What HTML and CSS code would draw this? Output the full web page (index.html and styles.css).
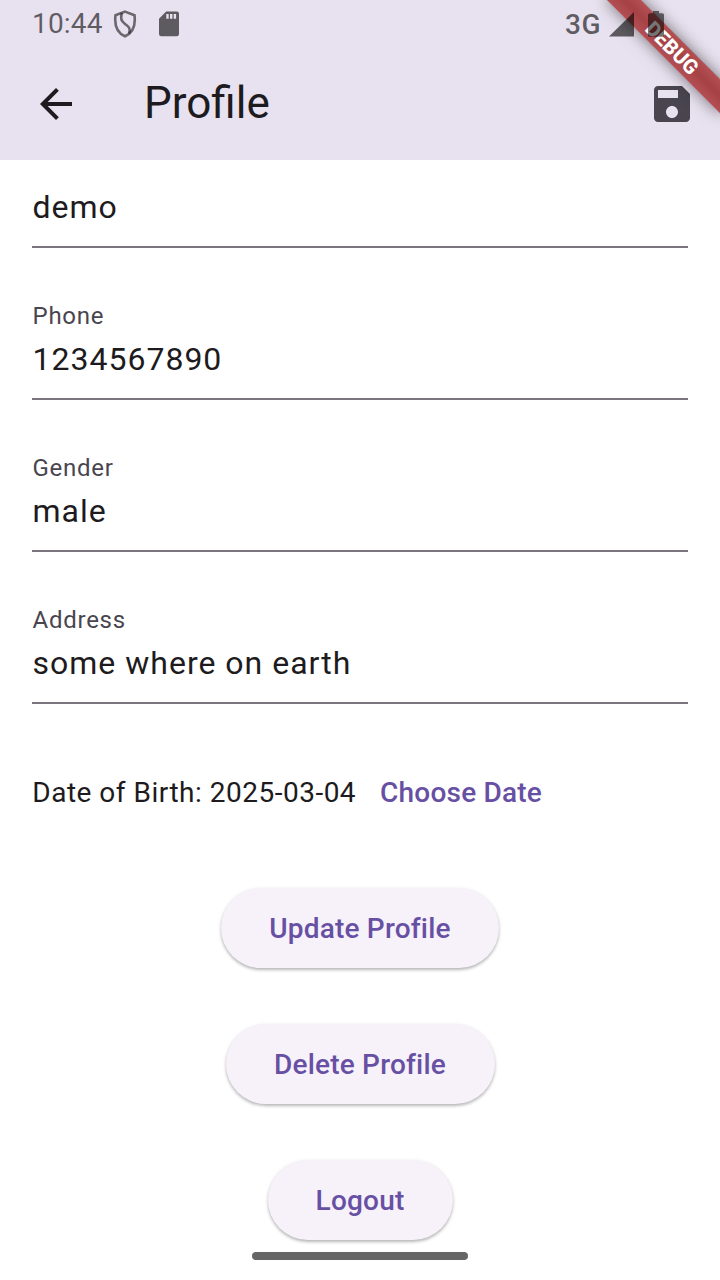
FILE: index.html
```
<!DOCTYPE html>
<html lang="en">
<head>
<meta charset="utf-8">
<title>Profile</title>
<link rel="stylesheet" href="styles.css">
</head>
<body>
<div class="screen">
  <header class="top">
    <div class="status">
      <span class="clock">10:44</span>
      <svg class="shield" width="24" height="28" viewBox="0 0 24 28" fill="none" stroke="currentColor" stroke-width="2.6"><path d="M12 1.600 21.500 5.200C22.600 14 20.500 22.500 12 26.300 3.500 22.500 1.400 14 2.500 5.200Z"/><path d="M9 3C7 8 8.500 11.500 12 14S18 18 16 23.500"/></svg>
      <svg class="sd" width="20" height="26" viewBox="0 0 20 26" fill="currentColor" fill-rule="evenodd"><path d="M7.200 .5H17.700Q20 .5 20 2.800V23Q20 25.300 17.700 25.300H2.300Q0 25.300 0 23V7.800ZM7.300 3V7.800H9.700V3ZM11 3V7.800H13.400V3ZM14.700 3V7.800H17.100V3Z"/></svg>
      <span class="network">3G</span>
      <svg class="signal" width="25" height="25" viewBox="0 0 25 25" fill="currentColor"><path d="M25 0V24.500H0Z"/></svg>
      <svg class="battery" width="16" height="26" viewBox="0 0 16 26" fill="currentColor"><path d="M5 0H11V2.200H14.400Q16 2.200 16 3.800V24.200Q16 25.800 14.400 25.800H1.600Q0 25.800 0 24.200V3.800Q0 2.200 1.600 2.200H5Z"/></svg>
    </div>
    <div class="appbar">
      <svg class="back" width="48" height="48" viewBox="0 0 24 24" fill="currentColor"><path d="M20 11H7.830l5.590-5.590L12 4l-8 8 8 8 1.410-1.410L7.830 13H20v-2z"/></svg>
      <h1 class="title">Profile</h1>
      <svg class="save" width="48" height="48" viewBox="0 0 24 24" fill="currentColor"><path d="M17 3H5c-1.110 0-2 .9-2 2v14c0 1.100.89 2 2 2h14c1.100 0 2-.9 2-2V7l-4-4zm-5 16c-1.660 0-3-1.340-3-3s1.340-3 3-3 3 1.340 3 3-1.340 3-3 3zm3-10H5V5h10v4z"/></svg>
    </div>
  </header>
  <main class="content">
    <div class="field field-first"><div class="value">demo</div></div>
    <div class="field"><div class="label">Phone</div><div class="value">1234567890</div></div>
    <div class="field"><div class="label">Gender</div><div class="value">male</div></div>
    <div class="field"><div class="label">Address</div><div class="value">some where on earth</div></div>
    <div class="birth"><span>Date of Birth: 2025-03-04</span><span class="choose">Choose Date</span></div>
    <div class="actions">
      <button class="btn btn-update">Update Profile</button>
      <button class="btn btn-delete">Delete Profile</button>
      <button class="btn btn-logout">Logout</button>
    </div>
  </main>
  <div class="banner">DEBUG</div>
  <div class="home"></div>
</div>
</body>
</html>
```
FILE: styles.css
```
* { box-sizing: border-box; }
body { margin: 0; font-family: Roboto, sans-serif; color: #1d1b20; background: #fff; }
.screen { position: relative; width: 720px; height: 1280px; overflow: hidden; }
.top { height: 160px; background: #e8e1ef; }
.status { position: relative; z-index: 2; display: flex; align-items: flex-start; height: 48px; color: rgba(0, 0, 0, 0.6); }
.status svg { display: block; flex: none; }
.clock { width: 81px; padding-left: 32px; font-size: 28px; line-height: 32px; margin-top: 8px; letter-spacing: 0.2px; }
.shield { margin: 10px 0 0 32px; opacity: 0.9; }
.sd { margin: 11px 0 0 22px; }
.network { margin: 9px 0 0 386px; width: 44px; font-size: 28px; line-height: 32px; font-weight: 500; letter-spacing: 0.5px; white-space: nowrap; }
.signal { margin-top: 12px; }
.battery { margin: 11px 0 0 14px; color: rgba(0, 0, 0, 0.54); }
.appbar { display: flex; align-items: center; height: 112px; padding: 0 24px 0 32px; }
.title { margin: -2px 0 0 64px; font-size: 44px; line-height: 56px; font-weight: 400; }
.save { margin-left: auto; color: #49454f; }
.content { padding: 0 32px; }
.field { height: 152px; border-bottom: 2px solid #79747e; padding-top: 54px; }
.field-first { height: 88px; padding-top: 23px; }
.label { padding-left: 0.5px; font-size: 24px; line-height: 28px; letter-spacing: 0.75px; color: #49454f; }
.value { padding-left: 0.5px; font-size: 32px; line-height: 48px; letter-spacing: 1px; margin-top: 5px; }
.field-first .value { margin-top: 0; }
.birth { display: flex; gap: 24px; margin-top: 69px; padding-left: 0.3px; font-size: 28px; line-height: 40px; letter-spacing: 0.5px; }
.choose { color: #6750a4; font-weight: 500; letter-spacing: 0.2px; }
.actions { display: flex; flex-direction: column; align-items: center; gap: 56px; margin-top: 75px; }
.btn { height: 80px; padding: 2px 0 0; border: 0; border-radius: 40px; background: #f7f2fa; color: #6750a4; font: 500 28px/40px Roboto, sans-serif; letter-spacing: 0.2px; box-shadow: 0 2px 3px rgba(0, 0, 0, 0.24), 0 1px 5px rgba(0, 0, 0, 0.08); }
.btn-update { width: 278px; }
.btn-delete { width: 269px; }
.btn-logout { width: 185px; }
.banner { position: absolute; z-index: 1; left: 640px; top: 56px; width: 160px; height: 24px; transform: rotate(45deg); transform-origin: 80px -56px; text-align: center; font-size: 20.4px; line-height: 24px; font-weight: 800; color: #fff; background: linear-gradient(rgba(183, 28, 28, 0.63), rgba(183, 28, 28, 0.63)), linear-gradient(rgba(0, 0, 0, 0.25), rgba(0, 0, 0, 0.42), rgba(0, 0, 0, 0.25)); box-shadow: 0 0 16px rgba(0, 0, 0, 0.5); }
.home { position: absolute; left: 252px; top: 1252px; width: 216px; height: 8px; border-radius: 4px; background: #666; }
```
